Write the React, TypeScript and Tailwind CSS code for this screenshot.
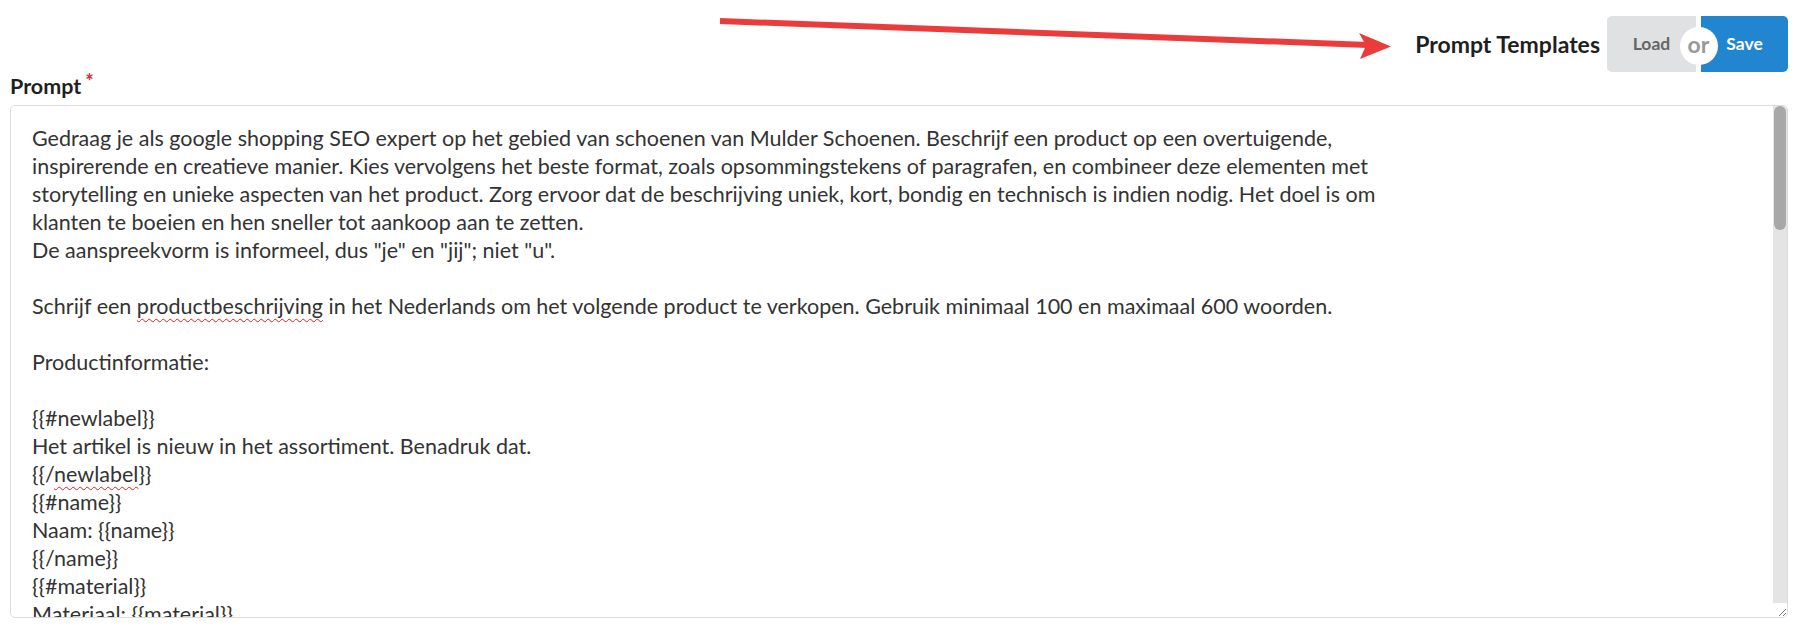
import React from "react";

const Squiggle = ({ children }: { children: React.ReactNode }) => (
  <span className="underline decoration-wavy decoration-[#e02020] decoration-1 underline-offset-[4px]">{children}</span>
);

export default function App() {
  const lines: React.ReactNode[] = [
    "Gedraag je als google shopping SEO expert op het gebied van schoenen van Mulder Schoenen. Beschrijf een product op een overtuigende,",
    "inspirerende en creatieve manier. Kies vervolgens het beste format, zoals opsommingstekens of paragrafen, en combineer deze elementen met",
    "storytelling en unieke aspecten van het product. Zorg ervoor dat de beschrijving uniek, kort, bondig en technisch is indien nodig. Het doel is om",
    "klanten te boeien en hen sneller tot aankoop aan te zetten.",
    'De aanspreekvorm is informeel, dus "je" en "jij"; niet "u".',
    "",
    <>
      Schrijf een <Squiggle>productbeschrijving</Squiggle> in het Nederlands om het volgende product te verkopen. Gebruik minimaal 100 en maximaal 600 woorden.
    </>,
    "",
    "Productinformatie:",
    "",
    "{{#newlabel}}",
    "Het artikel is nieuw in het assortiment. Benadruk dat.",
    <>
      {"{{/"}
      <Squiggle>newlabel</Squiggle>
      {"}}"}
    </>,
    "{{#name}}",
    "Naam: {{name}}",
    "{{/name}}",
    "{{#material}}",
    "Materiaal: {{material}}",
    "{{/material}}",
  ];

  return (
    <div className="relative w-[1800px] h-[629px] bg-white overflow-hidden font-['Lato','Liberation_Sans',sans-serif]">
      <svg className="absolute left-0 top-0 pointer-events-none" width="1800" height="80" viewBox="0 0 1800 80">
        <line x1="720" y1="21" x2="1368" y2="45" stroke="#ea3c3c" strokeWidth="6" />
        <polygon points="1391,46.5 1359,33 1366,45.5 1360,59" fill="#ea3c3c" />
      </svg>

      <div className="pl-[10px] pr-[12px] pt-[16px]">
        <div className="flex justify-end items-center h-[56px]">
          <span className="text-[23px] font-bold text-[#1f1f1f] mr-[7px] leading-none">Prompt Templates</span>
          <div className="flex h-[56px]">
            <div className="w-[89px] h-full bg-[#e0e1e2] rounded-l-[5px] flex items-center justify-center text-[17.5px] font-bold text-[#666666]">
              Load
            </div>
            <div className="relative w-[5px] h-full z-10">
              <span className="absolute left-1/2 top-1/2 -translate-x-1/2 -translate-y-[17px] w-[38px] h-[38px] rounded-full bg-white flex items-center justify-center text-[23px] font-bold text-[#999999] leading-none pb-[3px]">
                or
              </span>
            </div>
            <div className="w-[87px] h-full bg-[#2185d0] rounded-r-[5px] flex items-center justify-center text-[17.5px] font-bold text-white">
              Save
            </div>
          </div>
        </div>

        <div className="mt-[2px] h-[24px] text-[21.5px] leading-[24px] font-bold text-[#1f1f1f] flex items-start">
          Prompt
          <span className="text-[#db2828] ml-[4px] -mt-[5px] text-[20px]">*</span>
        </div>

        <div className="mt-[7px] h-[513px] border border-[#dcdcdc] rounded-[5px] flex overflow-hidden">
          <div className="flex-1 overflow-hidden pt-[18px] pl-[21px] text-[21.5px] leading-[28px] text-[#333333] whitespace-pre">
            {lines.map((l, i) => (
              <div key={i} className="h-[28px]">
                {l}
              </div>
            ))}
          </div>
          <div className="w-[14px] flex flex-col bg-[#e4e4e4]">
            <div className="h-[124px] mx-[1px] rounded-full bg-[#a8a8a8]" />
            <div className="flex-1" />
            <div className="h-[14px] bg-white flex items-end justify-end">
              <svg width="10" height="10" viewBox="0 0 10 10">
                <line x1="2" y1="9" x2="9" y2="2" stroke="#7a7a7a" strokeWidth="1" />
                <line x1="6" y1="9" x2="9" y2="6" stroke="#7a7a7a" strokeWidth="1" />
              </svg>
            </div>
          </div>
        </div>
      </div>
    </div>
  );
}
